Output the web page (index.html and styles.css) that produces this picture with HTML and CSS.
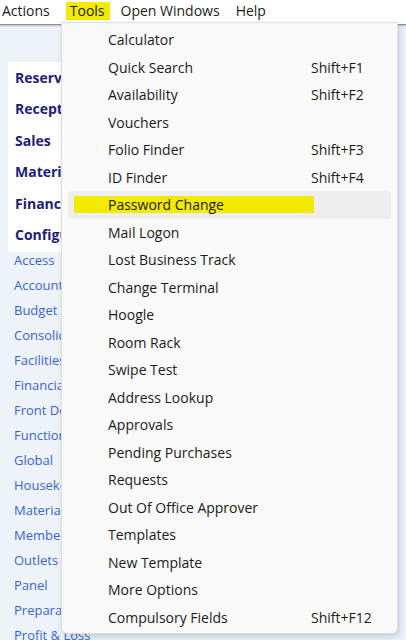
FILE: index.html
```html
<!DOCTYPE html>
<html>
<head>
<meta charset="utf-8">
<link rel="stylesheet" href="styles.css">
</head>
<body>
<div class="menubar">
  <span class="mb-item">Actions</span>
  <span class="mb-item mb-tools">Tools</span>
  <span class="mb-item mb-open">Open Windows</span>
  <span class="mb-item mb-help">Help</span>
</div>
<div class="toolbar-line"></div>
<div class="main">
  <div class="sidebar">
    <div class="card">
      <div class="sec">Reservations</div>
      <div class="sec">Reception</div>
      <div class="sec">Sales</div>
      <div class="sec">Materials</div>
      <div class="sec">Finance</div>
      <div class="sec">Configuration</div>
    </div>
    <div class="links">
      <div class="lnk">Access</div>
      <div class="lnk">Accounts</div>
      <div class="lnk">Budget</div>
      <div class="lnk">Consolidation</div>
      <div class="lnk">Facilities</div>
      <div class="lnk">Financial</div>
      <div class="lnk">Front Desk</div>
      <div class="lnk">Functions</div>
      <div class="lnk">Global</div>
      <div class="lnk">Housekeeping</div>
      <div class="lnk">Materials</div>
      <div class="lnk">Members</div>
      <div class="lnk">Outlets</div>
      <div class="lnk">Panel</div>
      <div class="lnk">Preparation</div>
      <div class="lnk">Profit &amp; Loss</div>
    </div>
  </div>
</div>
<div class="dropdown">
  <div class="row"><span class="lbl">Calculator</span><span class="sc"></span></div>
  <div class="row"><span class="lbl">Quick Search</span><span class="sc">Shift+F1</span></div>
  <div class="row"><span class="lbl">Availability</span><span class="sc">Shift+F2</span></div>
  <div class="row"><span class="lbl">Vouchers</span><span class="sc"></span></div>
  <div class="row"><span class="lbl">Folio Finder</span><span class="sc">Shift+F3</span></div>
  <div class="row"><span class="lbl">ID Finder</span><span class="sc">Shift+F4</span></div>
  <div class="row hover"><span class="hl">Password Change</span></div>
  <div class="row"><span class="lbl">Mail Logon</span><span class="sc"></span></div>
  <div class="row"><span class="lbl">Lost Business Track</span><span class="sc"></span></div>
  <div class="row"><span class="lbl">Change Terminal</span><span class="sc"></span></div>
  <div class="row"><span class="lbl">Hoogle</span><span class="sc"></span></div>
  <div class="row"><span class="lbl">Room Rack</span><span class="sc"></span></div>
  <div class="row"><span class="lbl">Swipe Test</span><span class="sc"></span></div>
  <div class="row"><span class="lbl">Address Lookup</span><span class="sc"></span></div>
  <div class="row"><span class="lbl">Approvals</span><span class="sc"></span></div>
  <div class="row"><span class="lbl">Pending Purchases</span><span class="sc"></span></div>
  <div class="row"><span class="lbl">Requests</span><span class="sc"></span></div>
  <div class="row"><span class="lbl">Out Of Office Approver</span><span class="sc"></span></div>
  <div class="row"><span class="lbl">Templates</span><span class="sc"></span></div>
  <div class="row"><span class="lbl">New Template</span><span class="sc"></span></div>
  <div class="row"><span class="lbl">More Options</span><span class="sc"></span></div>
  <div class="row"><span class="lbl">Compulsory Fields</span><span class="sc">Shift+F12</span></div>
</div>
</body>
</html>
```
FILE: styles.css
```css
html, body {
  margin: 0;
  padding: 0;
  width: 406px;
  height: 640px;
  overflow: hidden;
  background: #eef3fa;
  font-family: "Open Sans", "Noto Sans", sans-serif;
  color: #1b1b1b;
}
.menubar {
  height: 22px;
  background: #ffffff;
  display: flex;
  align-items: center;
  font-size: 14px;
  position: relative;
}
.mb-item {
  line-height: 18px;
  white-space: nowrap;
}
.mb-item:first-child { margin-left: 2px; }
.mb-tools {
  margin-left: 16px;
  padding: 0 5px 0 4px;
  background: #f2ea00;
}
.mb-open { margin-left: 11px; }
.mb-help { margin-left: 16px; }
.toolbar-line {
  height: 5px;
  background: linear-gradient(#ffffff 0, #ffffff 2px, #8c8c8c 2px, #8c8c8c 3px, #c8c8c8 3px, #e4e4e4 5px);
}
.main {
  display: flex;
}
.sidebar {
  width: 140px;
  padding-left: 8px;
  padding-top: 35px;
}
.card {
  background: #ffffff;
  padding: 0 0 2px 7px;
}
.sec {
  height: 31.4px;
  line-height: 31.4px;
  font-weight: bold;
  font-size: 14px;
  color: #1d1d7a;
  white-space: nowrap;
}
.links {
  margin-top: -4px;
}
.lnk {
  height: 25px;
  line-height: 25px;
  font-size: 13px;
  color: #3b63d6;
  padding-left: 6px;
  white-space: nowrap;
}
.dropdown {
  position: absolute;
  left: 61px;
  top: 22px;
  width: 335px;
  height: 607px;
  background: #f9f9f9;
  border: 1px solid #dedede;
  border-radius: 0 0 6px 6px;
  box-shadow: 2px 3px 6px rgba(80, 90, 110, 0.25);
  padding-top: 3px;
  box-sizing: content-box;
  font-size: 14px;
}
.row {
  height: 27.5px;
  display: grid;
  grid-template-columns: 203px auto;
  align-items: center;
  margin: 0 6px;
  padding-left: 40px;
  border-radius: 4px;
  white-space: nowrap;
}
.row.hover {
  background: #eeeeee;
  padding-left: 6px;
  display: flex;
}
.hl {
  display: block;
  width: 206px;
  height: 17px;
  line-height: 17px;
  padding-left: 34px;
  background: #f2ea00;
}
```
